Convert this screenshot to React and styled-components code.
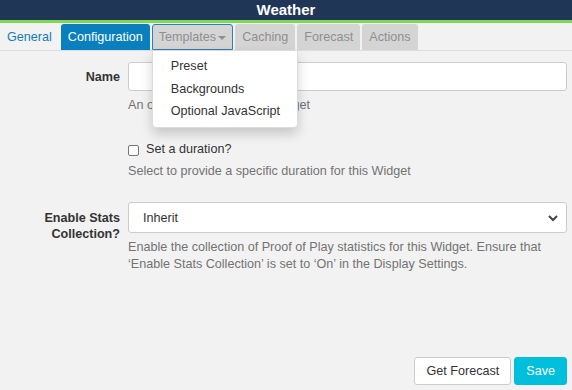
import React from "react";
import styled, { createGlobalStyle } from "styled-components";

const GlobalStyle = createGlobalStyle`
  html, body {
    margin: 0;
    padding: 0;
    background: #f2f2f2;
    font-family: "Liberation Sans", Arial, sans-serif;
    font-size: 12.6px;
    color: #333;
  }
`;

const Page = styled.div`
  width: 572px;
  height: 390px;
  display: flex;
  flex-direction: column;
  background: #f2f2f2;
  overflow: hidden;
`;

const Header = styled.div`
  height: 20px;
  background: #1f3657;
  border-bottom: 3px solid #7ed957;
  color: #fff;
  font-weight: bold;
  font-size: 15px;
  line-height: 20px;
  text-align: center;
`;

const Tabs = styled.ul`
  list-style: none;
  margin: 1px 0 0;
  padding: 0;
  display: flex;
  gap: 2px;
  border-bottom: 1px solid #ddd;
  height: 26px;
`;

const TabItem = styled.li`
  position: relative;
`;

const Tab = styled.a`
  display: flex;
  align-items: center;
  height: 26px;
  box-sizing: border-box;
  padding: 0 6px;
  border-radius: 3px 3px 0 0;
  cursor: pointer;
  background: ${(p) =>
    p.$active ? "#0a7fbe" : p.$plain ? "transparent" : "#d4d4d4"};
  color: ${(p) => (p.$active ? "#fff" : p.$plain ? "#1479b8" : "#8f8f8f")};
  border: 1px solid ${(p) => (p.$focus ? "#2d7fb8" : "transparent")};
`;

const Caret = styled.span`
  display: inline-block;
  margin-left: 2px;
  margin-top: 2px;
  border-top: 4px solid #8f8f8f;
  border-left: 4px solid transparent;
  border-right: 4px solid transparent;
`;

const Menu = styled.ul`
  position: absolute;
  top: 26px;
  left: 0;
  width: 146px;
  box-sizing: border-box;
  margin: 0;
  padding: 4px 0 4px;
  list-style: none;
  background: #fff;
  border: 1px solid #dcdcdc;
  border-radius: 0 0 4px 4px;
  box-shadow: 0 6px 12px rgba(0, 0, 0, 0.18);
  z-index: 10;
`;

const MenuItem = styled.li`
  padding: 0 18px;
  height: 22.5px;
  line-height: 22px;
  color: #333;
  white-space: nowrap;
`;

const Form = styled.div`
  display: grid;
  grid-template-columns: 120px 1fr;
  column-gap: 8px;
  padding: 11px 5px 0 0;
`;

const Label = styled.label`
  font-weight: bold;
  text-align: right;
  line-height: 16px;
  padding-top: ${(p) => p.$top || "6px"};
  color: #333;
`;

const Field = styled.div`
  display: flex;
  flex-direction: column;
  margin-bottom: ${(p) => p.$mb || "0"};
`;

const Input = styled.input`
  height: 29px;
  box-sizing: border-box;
  border: 1px solid #ccc;
  border-radius: 3px;
  background: #fff;
  font: inherit;
  padding: 0 12px;
`;

const SelectBox = styled.div`
  height: 31px;
  box-sizing: border-box;
  border: 1px solid #ccc;
  border-radius: 3px;
  background: #fff;
  display: flex;
  align-items: center;
  justify-content: space-between;
  padding: 0 7px 0 14px;
  color: #333;
`;

const Help = styled.p`
  margin: ${(p) => p.$m || "6px 0 0"};
  color: #737373;
  line-height: 17px;
`;

const CheckRow = styled.label`
  display: flex;
  align-items: center;
  gap: 7px;
  padding-top: 1px;
  color: #333;
`;

const Box = styled.span`
  width: 11px;
  height: 11px;
  box-sizing: border-box;
  border: 1px solid #767676;
  border-radius: 2px;
  background: #fff;
  margin-top: 3px;
`;

const Footer = styled.div`
  margin-top: auto;
  display: flex;
  justify-content: flex-end;
  gap: 3px;
  padding: 0 5px 5px 0;
`;

const Button = styled.button`
  height: 28px;
  box-sizing: border-box;
  padding: 0 11px;
  border-radius: 3px;
  font: inherit;
  border: 1px solid ${(p) => (p.$primary ? "#00bfdd" : "#ccc")};
  background: ${(p) => (p.$primary ? "#00bfdd" : "#fff")};
  color: ${(p) => (p.$primary ? "#fff" : "#333")};
`;

const Chevron = () => (
  <svg width="12" height="12" viewBox="0 0 12 12">
    <path d="M2 4l4 4 4-4" fill="none" stroke="#444" strokeWidth="2" />
  </svg>
);

export default function App() {
  return (
    <Page>
      <GlobalStyle />
      <Header>Weather</Header>
      <Tabs>
        <TabItem>
          <Tab $plain>General</Tab>
        </TabItem>
        <TabItem>
          <Tab $active>Configuration</Tab>
        </TabItem>
        <TabItem>
          <Tab $focus>
            Templates
            <Caret />
          </Tab>
          <Menu>
            <MenuItem>Preset</MenuItem>
            <MenuItem>Backgrounds</MenuItem>
            <MenuItem>Optional JavaScript</MenuItem>
          </Menu>
        </TabItem>
        <TabItem>
          <Tab>Caching</Tab>
        </TabItem>
        <TabItem>
          <Tab>Forecast</Tab>
        </TabItem>
        <TabItem>
          <Tab>Actions</Tab>
        </TabItem>
      </Tabs>
      <Form>
        <Label $top="7px">Name</Label>
        <Field $mb="27px">
          <Input />
          <Help>An optional name for this Widget</Help>
        </Field>
        <div />
        <Field $mb="22px">
          <CheckRow>
            <Box />
            Set a duration?
          </CheckRow>
          <Help $m="7px 0 0">
            Select to provide a specific duration for this Widget
          </Help>
        </Field>
        <Label $top="8px">
          Enable Stats
          <br />
          Collection?
        </Label>
        <Field>
          <SelectBox>
            Inherit
            <Chevron />
          </SelectBox>
          <Help $m="6px 0 0">
            Enable the collection of Proof of Play statistics for this Widget.
            Ensure that ‘Enable Stats Collection’ is set to ‘On’ in the Display
            Settings.
          </Help>
        </Field>
      </Form>
      <Footer>
        <Button>Get Forecast</Button>
        <Button $primary>Save</Button>
      </Footer>
    </Page>
  );
}
